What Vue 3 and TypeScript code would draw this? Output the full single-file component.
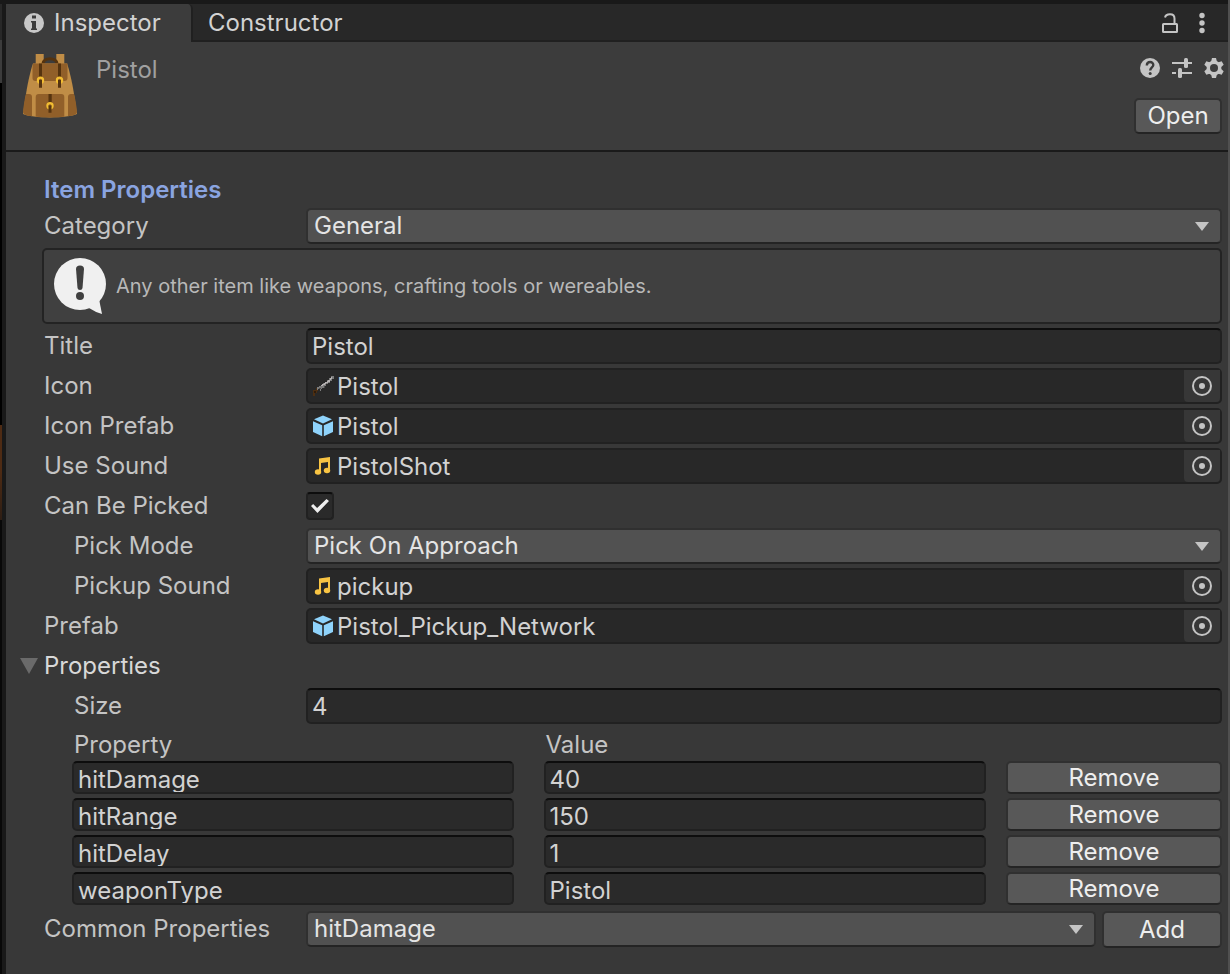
<script setup lang="ts">
import { ref } from 'vue'

type FieldKind = 'text' | 'object' | 'check' | 'select'
type Glyph = 'rifle' | 'cube' | 'note'

interface Field {
  id: string
  label: string
  kind: FieldKind
  value: string
  glyph?: Glyph
  nested?: boolean
}

interface Property {
  name: string
  value: string
}

const categories = ['General', 'Consumable']
const category = ref('General')
const canBePicked = ref(true)
const size = ref('4')
const common = ref('hitDamage')
const expanded = ref(true)

const fields = ref<Field[]>([
  { id: 'title', label: 'Title', kind: 'text', value: 'Pistol' },
  { id: 'icon', label: 'Icon', kind: 'object', value: 'Pistol', glyph: 'rifle' },
  { id: 'icon-prefab', label: 'Icon Prefab', kind: 'object', value: 'Pistol', glyph: 'cube' },
  { id: 'use-sound', label: 'Use Sound', kind: 'object', value: 'PistolShot', glyph: 'note' },
  { id: 'can-be-picked', label: 'Can Be Picked', kind: 'check', value: '' },
  { id: 'pick-mode', label: 'Pick Mode', kind: 'select', value: 'Pick On Approach', nested: true },
  { id: 'pickup-sound', label: 'Pickup Sound', kind: 'object', value: 'pickup', glyph: 'note', nested: true },
  { id: 'prefab', label: 'Prefab', kind: 'object', value: 'Pistol_Pickup_Network', glyph: 'cube' },
])

const properties = ref<Property[]>([
  { name: 'hitDamage', value: '40' },
  { name: 'hitRange', value: '150' },
  { name: 'hitDelay', value: '1' },
  { name: 'weaponType', value: 'Pistol' },
])

function removeProperty(index: number) {
  properties.value.splice(index, 1)
}

function addProperty() {
  properties.value.push({ name: common.value, value: '' })
}
</script>

<template>
  <div class="window">
    <div class="backdrop"></div>
    <main class="inspector">
      <nav class="tabs">
        <button class="tab active" type="button">
          <svg width="20" height="20" viewBox="0 0 20 20">
            <circle cx="10" cy="10" r="10" fill="#c8c8c8" />
            <path d="M8 2.5h4v3H8zM7 8h5v7.500h1V17H7v-1.500h1v-6H7z" fill="#3c3c3c" />
          </svg>
          Inspector
        </button>
        <button class="tab" type="button">Constructor</button>
        <div class="tab-tools">
          <button class="tool" type="button" aria-label="Lock">
            <svg width="18" height="22" viewBox="0 0 18 22" fill="none" stroke="#c4c4c4" stroke-width="2">
              <rect x="2" y="12" width="14" height="8" rx="0.500" />
              <path d="M4 5.500C4.800 1.300 13.500.5 13.500 6.500V12" />
            </svg>
          </button>
          <button class="tool" type="button" aria-label="More">
            <svg width="20" height="22" viewBox="0 0 20 22" fill="#c4c4c4">
              <circle cx="10" cy="3.500" r="2.700" />
              <circle cx="10" cy="11" r="2.700" />
              <circle cx="10" cy="18.500" r="2.700" />
            </svg>
          </button>
        </div>
      </nav>

      <header class="header">
        <svg class="bag" width="54" height="64" viewBox="0 0 54 64">
          <path d="M12.700 0h8v12h-8zM33.300 0h8v12h-8z" fill="#c08d46" />
          <path d="M20 10C20 3 34 3 34 10" fill="none" stroke="#55330f" stroke-width="3.200" />
          <path d="M10 9.500H44C46 15 49 27 51 40L54 60C45 64.500 9 64.500 0 60L3 40C5 27 8 15 10 9.500Z" fill="#c08d46" />
          <path d="M10 9.500H44.500V24q0 3-3 3H12.500q-3 0-3-3V13Z" fill="#915f29" />
          <path d="M3 40H6q3 0 3 3V62.300Q0 61.500 0 58Q1 47 3 40ZM51 40H48q-3 0-3 3V62.300Q54 61.500 54 58Q53 47 51 40Z" fill="#915f29" />
          <path d="M12.700 43q0-3 3-3H38.300q3 0 3 3V62.800Q27 64.300 12.700 62.800Z" fill="#915f29" />
          <path d="M16 9.500h3v14h-3zM35 9.500h3v14h-3zM25.500 40h3.200v9h-3.200z" fill="#55330f" />
          <g fill="none" stroke="#f2bd32" stroke-width="2.200">
            <circle cx="17.500" cy="26.200" r="2.600" />
            <circle cx="36.500" cy="26.200" r="2.600" />
            <circle cx="27" cy="51.800" r="2.600" />
          </g>
          <path d="M16 26h3v7.700h-3zM35 26h3v7.700h-3zM25.500 51.500h3v7.300h-3z" fill="#55330f" />
        </svg>
        <h1 class="asset-name">Pistol</h1>
        <div class="header-side">
          <div class="header-tools">
            <button class="tool" type="button" aria-label="Help">
              <svg width="20" height="20" viewBox="0 0 20 20">
                <circle cx="10" cy="10" r="10" fill="#c4c4c4" />
                <path d="M6.800 7.500C7 2.800 13.500 3.200 13.300 7C13.200 9.300 10.200 9.400 10.200 12.500" fill="none" stroke="#3c3c3c" stroke-width="2.400" />
                <circle cx="10.200" cy="15.500" r="1.500" fill="#3c3c3c" />
              </svg>
            </button>
            <button class="tool" type="button" aria-label="Presets">
              <svg width="20" height="20" viewBox="0 0 20 20" fill="#c4c4c4">
                <path d="M0 4h12v2H0zM16 4h4v2h-4zM0 14h4v2H0zM9 14h11v2H9z" />
                <rect x="12" y="0" width="4" height="10" rx="1.500" />
                <rect x="6" y="10" width="4" height="10" rx="1.500" />
              </svg>
            </button>
            <button class="tool" type="button" aria-label="Settings">
              <svg width="20" height="20" viewBox="0 0 20 20">
                <g fill="#c4c4c4">
                  <circle cx="10" cy="10" r="7.400" />
                  <path v-for="a in [0, 60, 120]" :key="a" d="M8 0h4l1 4v12l-1 4H8l-1-4V4z" :transform="`rotate(${a} 10 10)`" />
                </g>
                <circle cx="10" cy="10" r="4" fill="#3c3c3c" />
              </svg>
            </button>
          </div>
          <button class="btn open" type="button">Open</button>
        </div>
      </header>

      <section class="body">
        <h2 class="heading">Item Properties</h2>

        <div class="row">
          <label class="label" for="category">Category</label>
          <div class="dropdown">
            <select id="category" v-model="category">
              <option v-for="c in categories" :key="c">{{ c }}</option>
            </select>
            <svg class="caret" width="14" height="9" viewBox="0 0 14 9"><path d="M0 0h14L7 9z" fill="#c4c4c4" /></svg>
          </div>
        </div>

        <div class="help">
          <svg width="54" height="58" viewBox="0 0 54 58">
            <circle cx="26" cy="27" r="26" fill="#f0f0f0" />
            <path d="M45 42L48 57Q41 55 35 51Z" fill="#f0f0f0" />
            <path d="M22 12q0-3.500 4-3.500t4 3.500L28.500 31q-.3 2-2.500 2t-2.500-2z" fill="#404040" />
            <circle cx="26" cy="39" r="4" fill="#404040" />
          </svg>
          <p>Any other item like weapons, crafting tools or wereables.</p>
        </div>

        <div v-for="f in fields" :key="f.id" class="row">
          <label class="label" :class="{ nested: f.nested }" :for="f.id">{{ f.label }}</label>

          <input v-if="f.kind === 'text'" :id="f.id" v-model="f.value" class="text" type="text" />

          <input v-else-if="f.kind === 'check'" :id="f.id" v-model="canBePicked" class="check" type="checkbox" />

          <div v-else-if="f.kind === 'select'" class="dropdown">
            <select :id="f.id" v-model="f.value">
              <option>Pick On Approach</option>
              <option>Pick On Action</option>
            </select>
            <svg class="caret" width="14" height="9" viewBox="0 0 14 9"><path d="M0 0h14L7 9z" fill="#c4c4c4" /></svg>
          </div>

          <div v-else class="object">
            <svg v-if="f.glyph === 'rifle'" width="22" height="22" viewBox="0 0 22 22" shape-rendering="crispEdges">
              <path d="M1 15h3v-2h2v3H5v2H3v3H1z" fill="#4d2f12" />
              <path d="M2 16h2v2H2z" fill="#2e1b0a" />
              <path d="M5 12h2v-1h2v-1h2V8h2V7h2V5h2V3h2V1h3v3h-2v2h-2v2h-2v1h-2v2h-2v2h-2v1H9v2H8v-2H6v1H5z" fill="#7c7c7c" />
              <path d="M9 10h1V9h2V8h1V7h2V6h1V5h2V3h1V2h1v2h-1v1h-1v2h-2v1h-2v1h-1v1h-2v1H9z" fill="#b6b2b2" />
              <path d="M7 13h2v1H7zM12 11h1v2h-1z" fill="#4b4b4b" />
            </svg>
            <svg v-else-if="f.glyph === 'cube'" width="22" height="22" viewBox="0 0 22 22" fill="#8fd3fb">
              <path d="M11 .5L20 4.300L11 8.500L2 4.300Z" />
              <path d="M1 6.200L10.200 10.200V21.300L1 17Z" />
              <path d="M21 6.200L11.800 10.200V21.300L21 17Z" />
            </svg>
            <svg v-else width="22" height="22" viewBox="0 0 22 22" fill="#f8c443">
              <path d="M7 3.500L18 2V15H16V7L9 8V17H7Z" />
              <ellipse cx="6" cy="17" rx="3.200" ry="2.800" />
              <ellipse cx="15" cy="15.500" rx="3.200" ry="2.800" />
            </svg>
            <input :id="f.id" v-model="f.value" type="text" readonly />
            <button class="picker" type="button" :aria-label="`Select ${f.label}`">
              <svg width="20" height="20" viewBox="0 0 20 20">
                <circle cx="10" cy="10" r="9" fill="none" stroke="#c4c4c4" stroke-width="2" />
                <circle cx="10" cy="10" r="3" fill="#c4c4c4" />
              </svg>
            </button>
          </div>
        </div>

        <button class="foldout" type="button" :aria-expanded="expanded" @click="expanded = !expanded">
          <svg width="18" height="16" viewBox="0 0 18 16"><path d="M0 0h18L9 16z" fill="#6a6a6a" /></svg>
          Properties
        </button>

        <div class="row">
          <label class="label nested" for="size">Size</label>
          <input id="size" v-model="size" class="text" type="text" />
        </div>

        <table class="table">
          <colgroup>
            <col class="col-name" />
            <col />
            <col class="col-action" />
          </colgroup>
          <thead>
            <tr>
              <th scope="col">Property</th>
              <th scope="col">Value</th>
              <td></td>
            </tr>
          </thead>
          <tbody>
            <tr v-for="(p, i) in properties" :key="i">
              <td class="name"><input v-model="p.name" class="text small" type="text" aria-label="Property" /></td>
              <td class="value"><input v-model="p.value" class="text small" type="text" aria-label="Value" /></td>
              <td><button class="btn remove" type="button" @click="removeProperty(i)">Remove</button></td>
            </tr>
          </tbody>
        </table>

        <div class="row common">
          <label class="label" for="common">Common Properties</label>
          <div class="dropdown">
            <select id="common" v-model="common">
              <option v-for="n in ['hitDamage', 'hitRange', 'hitDelay', 'weaponType']" :key="n">{{ n }}</option>
            </select>
            <svg class="caret" width="14" height="9" viewBox="0 0 14 9"><path d="M0 0h14L7 9z" fill="#c4c4c4" /></svg>
          </div>
          <button class="btn add" type="button" @click="addProperty">Add</button>
        </div>
      </section>
    </main>
  </div>
</template>

<style>
body {
  margin: 0;
  background: #383838;
}
</style>

<style scoped>
.window {
  display: flex;
  min-height: 100vh;
  box-sizing: border-box;
  background: #383838;
  color: #c4c4c4;
  font: 400 24px/32px Inter, "Liberation Sans", sans-serif;
}
.window *,
.window *::before {
  box-sizing: border-box;
}
button,
input,
select {
  margin: 0;
  padding: 0;
  border: 0;
  border-radius: 0;
  background: none;
  color: inherit;
  font: inherit;
  appearance: none;
  outline: none;
}
svg {
  display: block;
  flex: none;
}
.backdrop {
  width: 2px;
  background: linear-gradient(#191919 4px, #282828 4px 40px, #3c3c3c 40px 83px, #000 83px 425px, #4e2b14 425px 470px, #2e1e14 520px, #080808 520px);
}
.inspector {
  flex: 1;
  min-width: 0;
  border-left: 4px solid #191919;
  border-right: 2px solid #505050;
}
.tabs {
  display: flex;
  height: 42px;
  border-top: 4px solid #191919;
  background: #282828;
  box-shadow: inset 0 -2px #202020;
}
.tab {
  display: flex;
  align-items: center;
  gap: 10px;
  padding: 0 16px 0 15px;
  color: #d2d2d2;
}
.tab.active {
  width: 187px;
  padding: 0 0 0 18px;
  border-right: 2px solid #202020;
  border-radius: 0 5px 0 0;
  background: #3c3c3c;
}
.tab-tools {
  display: flex;
  align-items: center;
  gap: 13px;
  margin-left: auto;
  padding-right: 16px;
}
.header {
  display: flex;
  height: 110px;
  padding: 12px 0 0 17px;
  border-bottom: 2px solid #1a1a1a;
  background: #3c3c3c;
}
.asset-name {
  margin: 0 0 0 19px;
  color: #a0a0a0;
  font-size: 24px;
  font-weight: 400;
}
.header-side {
  display: flex;
  flex-direction: column;
  align-items: flex-end;
  gap: 20px;
  margin-left: auto;
  padding: 4px 4px 0 0;
}
.header-tools {
  display: flex;
  gap: 12px;
}
.btn {
  border: 2px solid #303030;
  border-bottom-color: #242424;
  border-radius: 5px;
  background: #585858;
  color: #eee;
  text-align: center;
}
.open {
  width: 88px;
  height: 36px;
  margin-right: 2px;
}
.body {
  display: flex;
  flex-direction: column;
  gap: 4px;
  padding: 20px 6px 26px 36px;
}
.heading {
  height: 32px;
  margin: 0;
  padding: 2px 0 0 2px;
  color: #8aa4e0;
  font-size: 24px;
  font-weight: 600;
}
.row {
  display: flex;
  height: 36px;
}
.label {
  flex: none;
  width: 264px;
  padding: 2px 0 0 2px;
  white-space: nowrap;
}
.nested {
  padding-left: 32px;
}
.dropdown {
  position: relative;
  flex: 1;
  min-width: 0;
}
.dropdown select {
  display: block;
  width: 100%;
  height: 36px;
  padding: 0 40px 2px 6px;
  border: 2px solid #303030;
  border-bottom-color: #242424;
  border-radius: 5px;
  background: #515151;
  color: #e4e4e4;
}
.caret {
  position: absolute;
  top: 14px;
  right: 13px;
  pointer-events: none;
}
.help {
  display: flex;
  align-items: center;
  gap: 8px;
  min-height: 76px;
  padding: 7px 10px;
  border: 2px solid #232323;
  border-radius: 5px;
  background: #404040;
  color: #b8b8b8;
  font-size: 20px;
  line-height: 28px;
}
.help p {
  margin: 0;
}
.text {
  flex: 1;
  width: 100%;
  min-width: 0;
  height: 36px;
  padding: 0 4px;
  border: 2px solid #212121;
  border-top-color: #0d0d0d;
  border-radius: 5px;
  background: #2a2a2a;
  color: #d2d2d2;
}
.small {
  display: block;
  height: 33px;
  padding-top: 3px;
}
.check {
  display: grid;
  place-items: center;
  width: 28px;
  height: 28px;
  margin-top: 4px;
  border: 2px solid #212121;
  border-top-color: #0d0d0d;
  border-radius: 4px;
  background: #2a2a2a;
}
.check:checked::before {
  content: "";
  width: 18px;
  height: 14px;
  background: #eee;
  clip-path: polygon(0 50%, 12% 36%, 34% 64%, 86% 0, 100% 14%, 36% 100%);
}
.object {
  display: flex;
  flex: 1;
  align-items: center;
  gap: 3px;
  min-width: 0;
  padding-left: 4px;
  border: 2px solid #212121;
  border-radius: 5px;
  background: #282828;
  color: #d2d2d2;
}
.object input {
  flex: 1;
  min-width: 0;
  padding-top: 2px;
}
.picker {
  display: grid;
  place-items: center;
  width: 36px;
  height: 32px;
  border-radius: 0 0 4px 4px;
  background: #373737;
}
.foldout {
  display: flex;
  align-items: center;
  align-self: flex-start;
  gap: 6px;
  height: 36px;
  margin-left: -22px;
  color: #d8d8d8;
}
.table {
  margin-left: 30px;
  border-collapse: collapse;
  table-layout: fixed;
}
.col-name {
  width: 41%;
}
.col-action {
  width: 216px;
}
.table th {
  height: 33px;
  padding: 0 0 0 2px;
  font-weight: 400;
  text-align: left;
}
.table td {
  padding: 0 0 4px;
}
.table thead td {
  padding: 0;
}
.table td.name {
  padding-right: 30px;
}
.table td.value {
  padding-right: 20px;
}
.remove {
  display: block;
  width: 100%;
  height: 33px;
  line-height: 28px;
}
.common {
  margin-top: -2px;
}
.common .dropdown {
  margin-right: 6px;
}
.add {
  width: 120px;
  height: 37px;
}
</style>
